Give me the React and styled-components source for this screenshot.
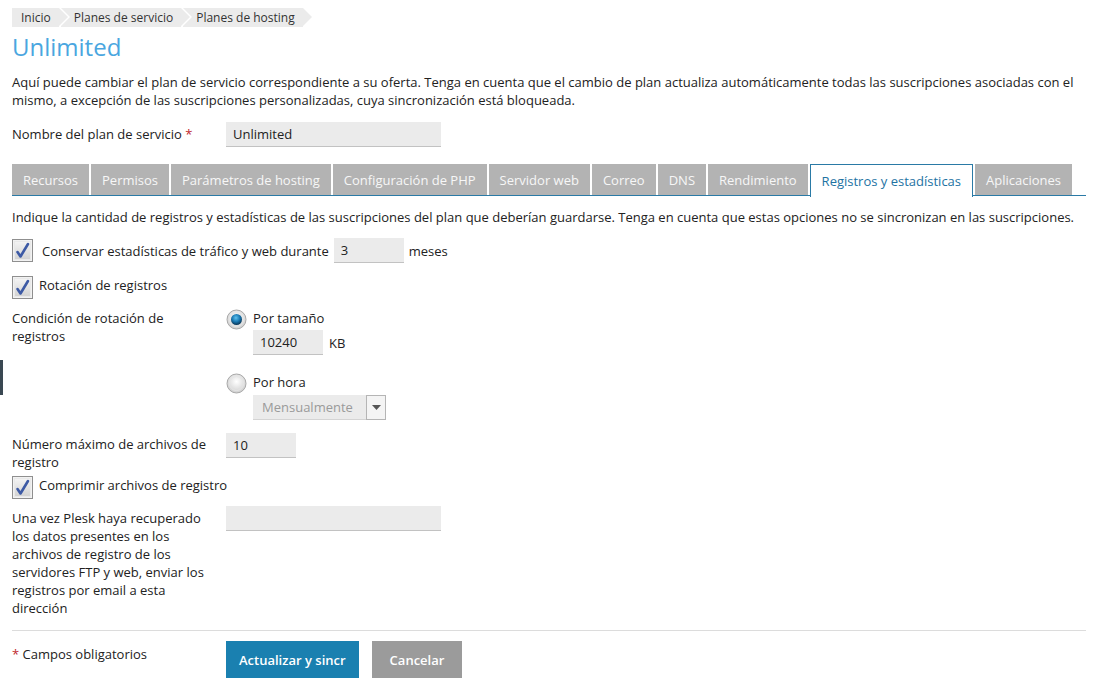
import React, { useId } from "react";
import styled, { createGlobalStyle } from "styled-components";

const Global = createGlobalStyle`
  html, body { margin: 0; padding: 0; background: #fff; }
  body { font-family: "Open Sans", "DejaVu Sans", sans-serif; font-size: 13px; color: #222; }
  * { box-sizing: border-box; }
`;

const Page = styled.div`
  position: relative;
  padding: 8px 9px 0 12px;
  width: 1095px;
  height: 678px;
  overflow: hidden;
`;

const SideMark = styled.div`
  position: absolute;
  left: 0;
  top: 360px;
  width: 3px;
  height: 35px;
  background: #3a4852;
`;

const Crumbs = styled.nav`
  display: flex;
  height: 19px;
`;

const Crumb = styled.div`
  position: relative;
  display: flex;
  align-items: center;
  height: 19px;
  padding: 0 8px 0 ${(p) => (p.$first ? "9px" : "13px")};
  background: #ebebeb;
  color: #333;
  font-size: 12px;
  margin-right: 2px;
  &::after {
    content: "";
    position: absolute;
    right: -9px;
    top: 0;
    border-left: 9px solid #ebebeb;
    border-top: 9.5px solid transparent;
    border-bottom: 9.5px solid transparent;
    z-index: 2;
  }
  &::before {
    content: "";
    position: absolute;
    right: -11px;
    top: 0;
    border-left: 9px solid #fff;
    border-top: 9.5px solid transparent;
    border-bottom: 9.5px solid transparent;
    z-index: 1;
  }
`;

const Title = styled.h1`
  margin: 6px 0 0;
  font-size: 24px;
  font-weight: 400;
  color: #4aa6e0;
  line-height: 28px;
`;

const Intro = styled.p`
  margin: 12px 0 0;
  line-height: 18px;
  padding-right: 10px;
`;

const FieldRow = styled.div`
  display: grid;
  grid-template-columns: 214px 1fr;
  align-items: start;
  margin-top: ${(p) => p.$mt ?? 0}px;
`;

const Label = styled.div`
  line-height: 18px;
  padding-top: ${(p) => p.$pt ?? 3}px;
  padding-right: 12px;
`;

const Req = styled.span`
  color: #c0272d;
`;

const TextInput = styled.div`
  width: ${(p) => p.$w}px;
  height: 25px;
  background: #ebebeb;
  border-bottom: 1px solid #c2c2c2;
  padding: 3px 7px;
  line-height: 18px;
  color: #222;
`;

const Tabs = styled.div`
  display: flex;
  gap: 2px;
  margin-top: 17px;
  border-bottom: 1px solid #2a7aa6;
  height: 32px;
`;

const Tab = styled.div`
  height: ${(p) => (p.$active ? "33px" : "31px")};
  padding: 0 11px;
  display: flex;
  align-items: center;
  background: ${(p) => (p.$active ? "#fff" : "#b3b3b3")};
  color: ${(p) => (p.$active ? "#1e73a3" : "#f7f7f7")};
  border: ${(p) => (p.$active ? "1px solid #2a7aa6" : "none")};
  border-bottom: none;
  position: relative;
  z-index: ${(p) => (p.$active ? 1 : 0)};
  white-space: nowrap;
`;

const Hint = styled.p`
  margin: 12px 0 0;
  line-height: 18px;
`;

const InlineRow = styled.div`
  display: flex;
  align-items: ${(p) => p.$align || "center"};
  gap: ${(p) => p.$gap ?? 6}px;
  margin-top: ${(p) => p.$mt ?? 0}px;
`;

const Text = styled.span`
  line-height: 18px;
  margin-left: ${(p) => p.$ml ?? 0}px;
`;

const Stack = styled.div`
  display: flex;
  flex-direction: column;
`;

const Indent = styled.div`
  padding-left: 27px;
  margin-top: ${(p) => p.$mt ?? 0}px;
  display: flex;
  align-items: center;
  gap: 6px;
`;

const SelectBox = styled.div`
  display: flex;
  width: 133px;
  height: 25px;
  background: #ebebeb;
  border-bottom: 1px solid #d4d4d4;
`;

const SelectValue = styled.div`
  flex: 1;
  padding: 3px 9px;
  line-height: 18px;
  color: #9a9a9a;
`;

const SelectArrow = styled.div`
  width: 20px;
  height: 25px;
  border: 1px solid #b5b5b5;
  background: #f4f4f4;
  display: flex;
  align-items: center;
  justify-content: center;
`;

const Divider = styled.hr`
  border: none;
  border-top: 1px solid #dcdcdc;
  margin: 13px 0 0;
`;

const Footer = styled.div`
  display: grid;
  grid-template-columns: 214px auto;
  align-items: start;
  margin-top: 10px;
`;

const Buttons = styled.div`
  display: flex;
  gap: 13px;
`;

const Button = styled.button`
  height: 37px;
  padding: 0 ${(p) => (p.$primary ? 13 : 18)}px;
  border: none;
  font-family: "Open Sans", sans-serif;
  font-size: 13px;
  font-weight: 600;
  color: #fff;
  background: ${(p) => (p.$primary ? "#1a80b0" : "#9b9b9b")};
`;

const Checkbox = () => {
  const id = useId().replace(/:/g, "");
  return (
    <svg width="21" height="23" viewBox="0 0 21 23">
      <defs>
        <linearGradient id={`cb${id}`} x1="0" y1="0" x2="0" y2="1">
          <stop offset="0" stopColor="#f4f4f4" />
          <stop offset="1" stopColor="#d2d2d2" />
        </linearGradient>
      </defs>
      <rect x="0.5" y="0.5" width="20" height="22" fill="#f2f2f2" stroke="#8f8f8f" />
      <rect x="2.5" y="2.5" width="16" height="18" fill={`url(#cb${id})`} stroke="#e9e9e9" />
      <path
        d="M5.5 13 L8.5 17.5 L16 5"
        fill="none"
        stroke="#3d5aa5"
        strokeWidth="2.6"
        strokeLinejoin="round"
        strokeLinecap="round"
      />
    </svg>
  );
};

const Radio = ({ on }) => {
  const id = useId().replace(/:/g, "");
  return (
    <svg width="21" height="21" viewBox="0 0 21 21">
      <defs>
        <radialGradient id={`rg${id}`} cx="0.5" cy="0.4" r="0.6">
          <stop offset="0" stopColor="#ffffff" />
          <stop offset="1" stopColor="#cfcfcf" />
        </radialGradient>
        <radialGradient id={`rb${id}`} cx="0.45" cy="0.35" r="0.6">
          <stop offset="0" stopColor="#5ec2f0" />
          <stop offset="0.6" stopColor="#1877b0" />
          <stop offset="1" stopColor="#0c3e62" />
        </radialGradient>
      </defs>
      <circle cx="10.5" cy="10.5" r="9.5" fill={`url(#rg${id})`} stroke="#a8a8a8" />
      <circle cx="10.5" cy="10.5" r="7" fill="none" stroke="#e6e6e6" />
      {on && <circle cx="10.5" cy="10.5" r="5.5" fill={`url(#rb${id})`} />}
    </svg>
  );
};

const tabs = [
  "Recursos",
  "Permisos",
  "Parámetros de hosting",
  "Configuración de PHP",
  "Servidor web",
  "Correo",
  "DNS",
  "Rendimiento",
  "Registros y estadísticas",
  "Aplicaciones",
];

export default function App() {
  return (
    <>
      <Global />
      <Page>
        <SideMark />
        <Crumbs>
          <Crumb $first>Inicio</Crumb>
          <Crumb>Planes de servicio</Crumb>
          <Crumb>Planes de hosting</Crumb>
        </Crumbs>
        <Title>Unlimited</Title>
        <Intro>
          Aquí puede cambiar el plan de servicio correspondiente a su oferta. Tenga en cuenta que el cambio de plan
          actualiza automáticamente todas las suscripciones asociadas con el mismo, a excepción de las suscripciones
          personalizadas, cuya sincronización está bloqueada.
        </Intro>
        <FieldRow $mt={13}>
          <Label>
            Nombre del plan de servicio <Req>*</Req>
          </Label>
          <TextInput $w={215}>Unlimited</TextInput>
        </FieldRow>
        <Tabs>
          {tabs.map((t) => (
            <Tab key={t} $active={t === "Registros y estadísticas"}>
              {t}
            </Tab>
          ))}
        </Tabs>
        <Hint>
          Indique la cantidad de registros y estadísticas de las suscripciones del plan que deberían guardarse. Tenga en
          cuenta que estas opciones no se sincronizan en las suscripciones.
        </Hint>
        <InlineRow $mt={12} $gap={0}>
          <Checkbox />
          <Text $ml={9}>Conservar estadísticas de tráfico y web durante</Text>
          <Text $ml={5}>
            <TextInput $w={70}>3</TextInput>
          </Text>
          <Text $ml={5}>meses</Text>
        </InlineRow>
        <InlineRow $mt={13} $align="flex-start">
          <Checkbox />
          <Text>Rotación de registros</Text>
        </InlineRow>
        <FieldRow $mt={10}>
          <Label $pt={0}>Condición de rotación de registros</Label>
          <Stack>
            <InlineRow $align="flex-start" $gap={6}>
              <Radio on />
              <Text>Por tamaño</Text>
            </InlineRow>
            <Indent $mt={0}>
              <TextInput $w={70}>10240</TextInput>
              <Text>KB</Text>
            </Indent>
            <InlineRow $mt={18} $align="flex-start" $gap={6}>
              <Radio />
              <Text>Por hora</Text>
            </InlineRow>
            <Indent $mt={1}>
              <SelectBox>
                <SelectValue>Mensualmente</SelectValue>
                <SelectArrow>
                  <svg width="9" height="5" viewBox="0 0 9 5">
                    <path d="M0 0 H9 L4.5 5 Z" fill="#555" />
                  </svg>
                </SelectArrow>
              </SelectBox>
            </Indent>
          </Stack>
        </FieldRow>
        <FieldRow $mt={13}>
          <Label $pt={2}>Número máximo de archivos de registro</Label>
          <TextInput $w={70}>10</TextInput>
        </FieldRow>
        <InlineRow $mt={5} $align="flex-start">
          <Checkbox />
          <Text>Comprimir archivos de registro</Text>
        </InlineRow>
        <FieldRow $mt={7}>
          <Label $pt={3}>
            Una vez Plesk haya recuperado los datos presentes en los archivos de registro de los servidores FTP y web,
            enviar los registros por email a esta dirección
          </Label>
          <TextInput $w={215} />
        </FieldRow>
        <Divider />
        <Footer>
          <Label $pt={4}>
            <Req>*</Req> Campos obligatorios
          </Label>
          <Buttons>
            <Button $primary>Actualizar y sincr</Button>
            <Button>Cancelar</Button>
          </Buttons>
        </Footer>
      </Page>
    </>
  );
}
